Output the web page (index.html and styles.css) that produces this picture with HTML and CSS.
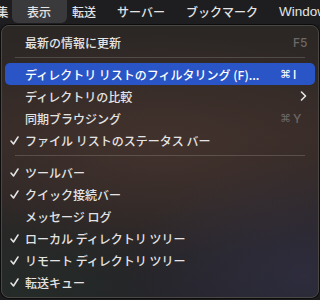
FILE: index.html
```html
<!DOCTYPE html>
<html lang="ja">
<head>
  <meta charset="UTF-8">
  <meta name="viewport" content="width=device-width, initial-scale=1.0">
  <title>表示メニュー</title>
  <link rel="stylesheet" href="styles.css">
</head>
<body>
  <nav class="menubar">
    <span class="menu-item cut">編集</span>
    <span class="menu-item active">表示</span>
    <span class="menu-item">転送</span>
    <span class="menu-item">サーバー</span>
    <span class="menu-item">ブックマーク</span>
    <span class="menu-item latin">Window</span>
  </nav>

  <div class="dropdown">
    <ul class="menu">
      <li class="row">
        <span class="check"></span>
        <span class="label">最新の情報に更新</span>
        <span class="key dim"><span class="mod"></span><span class="letter">F5</span></span>
      </li>
      <li class="sep"></li>
      <li class="row selected">
        <span class="check"></span>
        <span class="label">ディレクトリ リストのフィルタリング (F)...</span>
        <span class="key"><span class="mod">⌘</span><span class="letter">I</span></span>
      </li>
      <li class="row">
        <span class="check"></span>
        <span class="label">ディレクトリの比較</span>
        <svg class="chevron" width="7" height="10" viewBox="0 0 7 10"><path d="M1.5 1 L5.5 5 L1.5 9" fill="none" stroke="#e6e6e6" stroke-width="1.6" stroke-linecap="round" stroke-linejoin="round"/></svg>
      </li>
      <li class="row">
        <span class="check"></span>
        <span class="label">同期ブラウジング</span>
        <span class="key dim"><span class="mod">⌘</span><span class="letter">Y</span></span>
      </li>
      <li class="row">
        <span class="check"><svg width="9" height="9" viewBox="0 0 9 9"><path d="M1 5 L3.5 8 L8 1" fill="none" stroke="#e6e6e6" stroke-width="1.5" stroke-linecap="round" stroke-linejoin="round"/></svg></span>
        <span class="label">ファイル リストのステータス バー</span>
      </li>
      <li class="sep"></li>
      <li class="row">
        <span class="check"><svg width="9" height="9" viewBox="0 0 9 9"><path d="M1 5 L3.5 8 L8 1" fill="none" stroke="#e6e6e6" stroke-width="1.5" stroke-linecap="round" stroke-linejoin="round"/></svg></span>
        <span class="label">ツールバー</span>
      </li>
      <li class="row">
        <span class="check"><svg width="9" height="9" viewBox="0 0 9 9"><path d="M1 5 L3.5 8 L8 1" fill="none" stroke="#e6e6e6" stroke-width="1.5" stroke-linecap="round" stroke-linejoin="round"/></svg></span>
        <span class="label">クイック接続バー</span>
      </li>
      <li class="row">
        <span class="check"></span>
        <span class="label">メッセージ ログ</span>
      </li>
      <li class="row">
        <span class="check"><svg width="9" height="9" viewBox="0 0 9 9"><path d="M1 5 L3.5 8 L8 1" fill="none" stroke="#e6e6e6" stroke-width="1.5" stroke-linecap="round" stroke-linejoin="round"/></svg></span>
        <span class="label">ローカル ディレクトリ ツリー</span>
      </li>
      <li class="row">
        <span class="check"><svg width="9" height="9" viewBox="0 0 9 9"><path d="M1 5 L3.5 8 L8 1" fill="none" stroke="#e6e6e6" stroke-width="1.5" stroke-linecap="round" stroke-linejoin="round"/></svg></span>
        <span class="label">リモート ディレクトリ ツリー</span>
      </li>
      <li class="row">
        <span class="check"><svg width="9" height="9" viewBox="0 0 9 9"><path d="M1 5 L3.5 8 L8 1" fill="none" stroke="#e6e6e6" stroke-width="1.5" stroke-linecap="round" stroke-linejoin="round"/></svg></span>
        <span class="label">転送キュー</span>
      </li>
    </ul>
  </div>
</body>
</html>
```

FILE: styles.css
```css
body {
  margin: 0;
  padding: 0;
  width: 320px;
  height: 300px;
  overflow: hidden;
  background-color: #1c1c1e;
  font-family: "Noto Sans CJK JP", "Noto Sans", sans-serif;
  color: #e4e4e4;
}
.menubar {
  display: flex;
  height: 24px;
  align-items: stretch;
  background-color: #1e1e20;
  white-space: nowrap;
  overflow: hidden;
  font-size: 12px;
  font-weight: 500;
}
.menu-item {
  display: flex;
  align-items: center;
  padding: 0 10.5px;
  height: 23px;
}
.menu-item.cut {
  margin-left: -26px;
  padding-right: 8px;
}
.menu-item.active {
  padding: 0 15.5px;
  margin: 0 -5px;
  background-color: #3a3a3d;
  border-radius: 0 0 6px 6px;
}
.menu-item.latin {
  font-family: "Liberation Sans", Arial, sans-serif;
  font-size: 13.5px;
}
.dropdown {
  margin: 1px 0 0 1px;
  width: 316px;
  height: 271px;
  border: 1px solid #4a4644;
  border-radius: 8px;
  box-shadow: 0 0 0 1px #0c0c0c;
  background:
    radial-gradient(ellipse 180px 120px at 300px 250px, rgba(52, 50, 78, 0.55), transparent),
    radial-gradient(ellipse 140px 90px at 20px 270px, rgba(36, 48, 40, 0.6), transparent),
    radial-gradient(ellipse 260px 110px at 160px 120px, rgba(70, 52, 46, 0.8), transparent),
    linear-gradient(180deg, #2b2725 0%, #342a27 40%, #2a2626 70%, #242428 100%);
}
.menu {
  list-style: none;
  margin: 0;
  padding: 5px 3px 4px;
}
.row {
  display: flex;
  align-items: center;
  height: 22px;
  padding: 0 9px 0 4px;
  border-radius: 5px;
  font-size: 12px;
  font-weight: 500;
  white-space: nowrap;
}
.row.selected {
  background-color: #2a55c7;
  color: #ffffff;
}
.check {
  width: 15px;
  flex: none;
  display: flex;
  align-items: center;
  padding-left: 1px;
}
.label {
  flex: 1;
}
.key {
  display: flex;
  align-items: center;
  width: 26px;
  font-family: "Inter", "Liberation Sans", sans-serif;
  font-size: 12px;
  font-weight: 500;
}
.mod {
  width: 13px;
  flex: none;
  font-family: "DejaVu Sans", sans-serif;
  font-size: 11px;
}
.key.dim {
  color: #6c6866;
}
.chevron {
  margin-right: -1px;
}
.sep {
  height: 1px;
  margin: 4px 10px 5px;
  background-color: rgba(255, 255, 255, 0.16);
}
```
